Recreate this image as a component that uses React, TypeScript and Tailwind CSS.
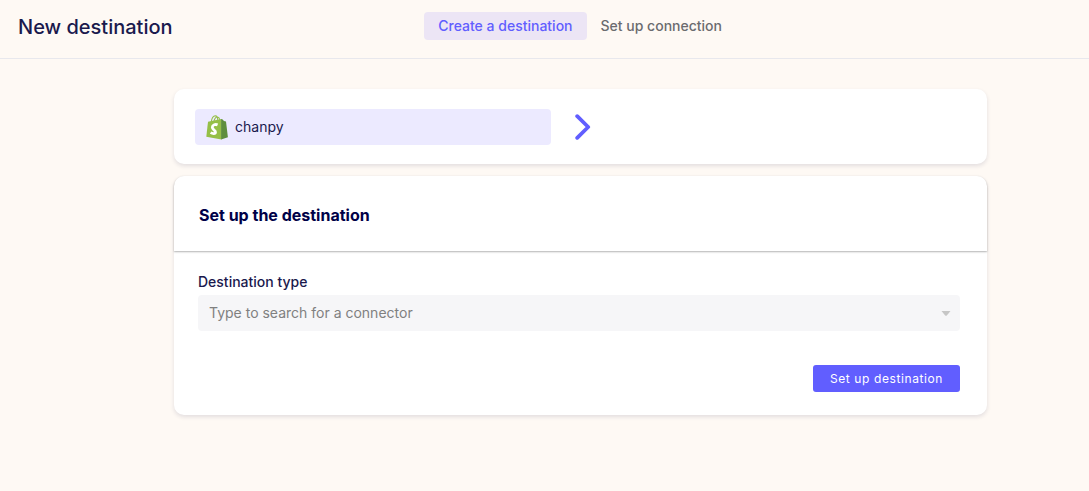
import React, { useState } from "react";

function ShopifyLogo() {
  return (
    <svg viewBox="0 0 22 25" className="h-[25px] w-[22px] shrink-0" aria-hidden="true">
      <path d="M2 6.8 15.3 4l.2 20.6L.3 21.8z" fill="#95bf47" />
      <path d="M15.1 4l1.2.3 1.7 1.8 2 .3 1.9 15.9-6.8 2.3z" fill="#5e8e3e" />
      <path
        d="M5.2 7C5.7 3.8 7.5 1 9.3.8c1.8 0 2.5 2.4 2.5 5M8 6.2C8.6 3.6 10.2 1.8 11.6 2c1.4.2 2 1.6 2.3 3"
        fill="none"
        stroke="#95bf47"
        strokeWidth="1.1"
      />
      <path
        d="M11.6 9.9C9.6 9 6.4 9.7 6.3 12.2c0 2.7 3.3 2.9 3.2 4.9-.1 2-2.9 1.7-4.9.5"
        fill="none"
        stroke="#fff"
        strokeWidth="2.8"
      />
    </svg>
  );
}

function Header() {
  return (
    <header className="grid grid-cols-[405fr_auto_334fr] items-center border-b border-[#e8e8ed] px-[18px] pt-3 pb-[18px]">
      <h1 className="pt-0.5 text-xl leading-[26px] font-medium text-[#1a194d]">New destination</h1>
      <nav className="flex text-sm font-medium" aria-label="Steps">
        <a href="#create" aria-current="step" className="rounded bg-[#ece5f5] px-3.5 py-1 text-[#615eff]">
          Create a destination
        </a>
        <a href="#connection" className="rounded px-3.5 py-1 text-[#6b6b6f]">
          Set up connection
        </a>
      </nav>
    </header>
  );
}

export default function App() {
  const [query, setQuery] = useState("");

  return (
    <div className="min-h-screen bg-[#fef9f4] font-['Inter',sans-serif]">
      <Header />
      <main className="flex flex-col gap-3 pt-[30px] pr-[102px] pb-8 pl-[174px]">
        <section className="flex items-center gap-6 rounded-[10px] bg-white px-[21px] pt-5 pb-[19px] shadow-[0_2px_4px_rgba(26,25,77,0.12)]">
          <div className="flex h-9 w-[356px] items-center gap-[7px] rounded bg-[#eceaff] px-[11px] text-sm text-[#1a194d]">
            <ShopifyLogo />
            <span>chanpy</span>
          </div>
          <svg viewBox="0 0 16 26" className="h-[26px] w-4" aria-hidden="true">
            <path
              d="M2.2 2.2 13.2 13 2.2 23.8"
              fill="none"
              stroke="#615eff"
              strokeWidth="3.8"
              strokeLinecap="round"
              strokeLinejoin="round"
            />
          </svg>
        </section>

        <section className="rounded-[10px] bg-white shadow-[0_2px_4px_rgba(26,25,77,0.12)]">
          <h2 className="rounded-t-[10px] px-[25px] pt-[27px] pb-6 text-base font-bold text-[#000047] shadow-[0_1px_2px_rgba(0,0,0,0.3)]">
            Set up the destination
          </h2>
          <form className="flex flex-col px-6 pt-[21px] pr-[27px] pb-[23px]" onSubmit={(e) => e.preventDefault()}>
            <label htmlFor="destination-type" className="pb-[3px] text-sm font-medium text-[#1a194d]">
              Destination type
            </label>
            <div className="flex h-9 items-center rounded bg-[#f6f6f8] pr-[9px] pl-[11px]">
              <input
                id="destination-type"
                type="text"
                role="combobox"
                aria-expanded="false"
                value={query}
                onChange={(e) => setQuery(e.target.value)}
                placeholder="Type to search for a connector"
                className="min-w-0 flex-1 bg-transparent text-sm text-[#1a194d] outline-none placeholder:text-[#808080]"
              />
              <svg viewBox="0 0 10 6" className="h-1.5 w-2.5" aria-hidden="true">
                <path d="M.5 1h9L5.8 5.4q-.8.8-1.6 0z" fill="#c6c6c6" />
              </svg>
            </div>
            <button
              type="submit"
              className="mt-[34px] self-end rounded-[3px] bg-[#615eff] px-[17px] py-[5px] text-xs leading-[17px] font-normal tracking-wider text-white"
            >
              Set up destination
            </button>
          </form>
        </section>
      </main>
    </div>
  );
}
